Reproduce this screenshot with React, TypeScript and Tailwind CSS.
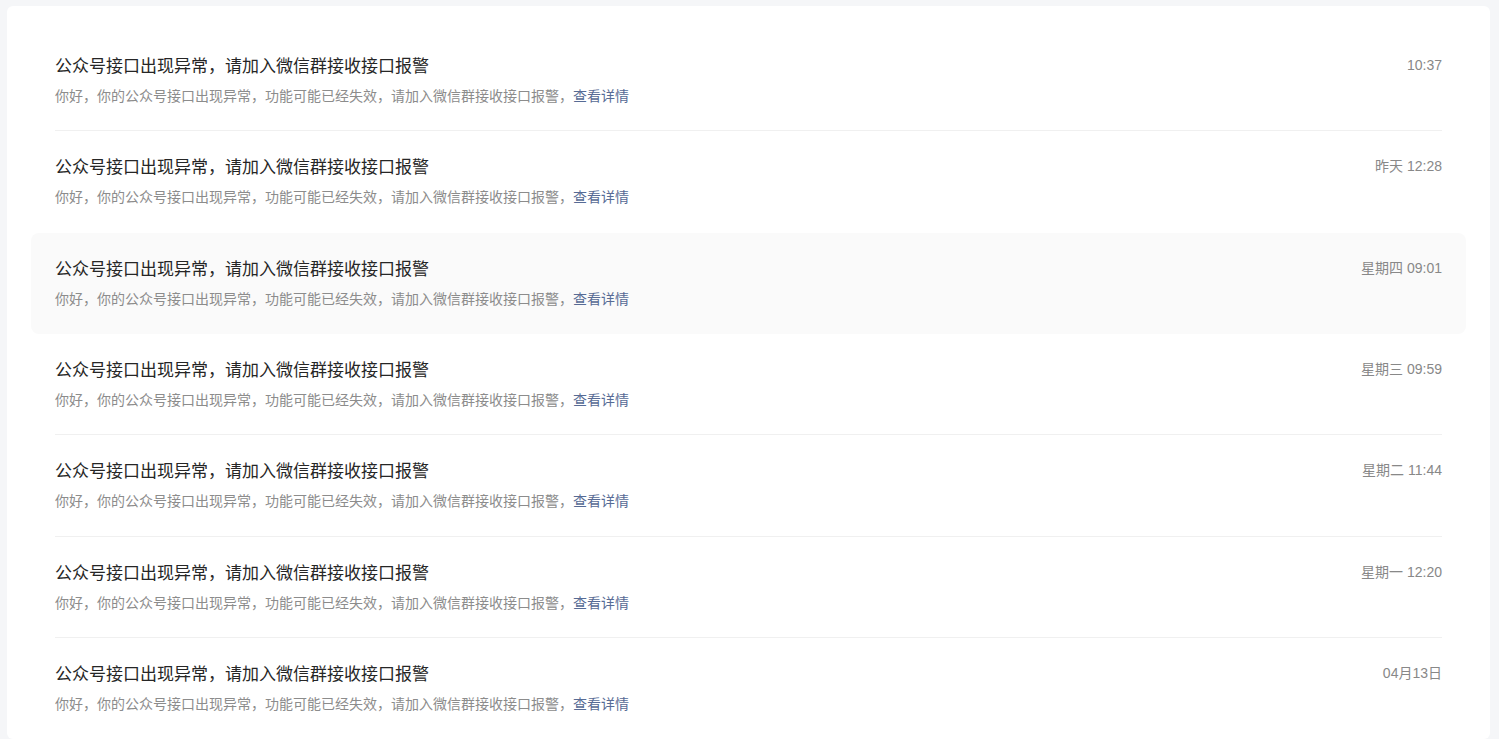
const messages = [
  { time: "10:37", border: true, tall: false },
  { time: "昨天 12:28", border: false, tall: true },
  { time: "星期四 09:01", border: false, tall: false, active: true },
  { time: "星期三 09:59", border: true, tall: false },
  { time: "星期二 11:44", border: true, tall: true },
  { time: "星期一 12:20", border: true, tall: false },
  { time: "04月13日", border: false, tall: false },
];

const App = () => {
  return (
    <div
      className="min-h-screen bg-[#f5f6f8] pt-[6px] pl-[7px] pr-[9px]"
      style={{ fontFamily: '"Liberation Sans", "Noto Sans CJK SC", sans-serif' }}
    >
      <div className="min-h-[733px] bg-white rounded-md px-6 pt-6">
        {messages.map((m, i) => (
          <div
            key={i}
            className={`px-6 rounded-lg cursor-pointer ${m.active ? "bg-[#fafafa]" : ""}`}
          >
            <div
              className={`flex justify-between items-start pt-[25px] border-b ${m.tall ? "h-[102px]" : "h-[101px]"} ${
                m.border ? "border-[#f0f0f0]" : "border-transparent"
              }`}
            >
              <div className="flex flex-col">
                {/* title */}
                <div className="text-[17px] leading-6 text-[#262626]">
                  公众号接口出现异常，请加入微信群接收接口报警
                </div>
                {/* desc */}
                <div className="mt-[7px] text-[14px] leading-5 text-[#8c8c8c]">
                  你好，你的公众号接口出现异常，功能可能已经失效，请加入微信群接收接口报警，
                  <span className="text-[#576b95]">查看详情</span>
                </div>
              </div>
              <div className="text-[14px] leading-5 text-[#888888] whitespace-nowrap">
                {m.time}
              </div>
            </div>
          </div>
        ))}
      </div>
    </div>
  );
};

export default App;
